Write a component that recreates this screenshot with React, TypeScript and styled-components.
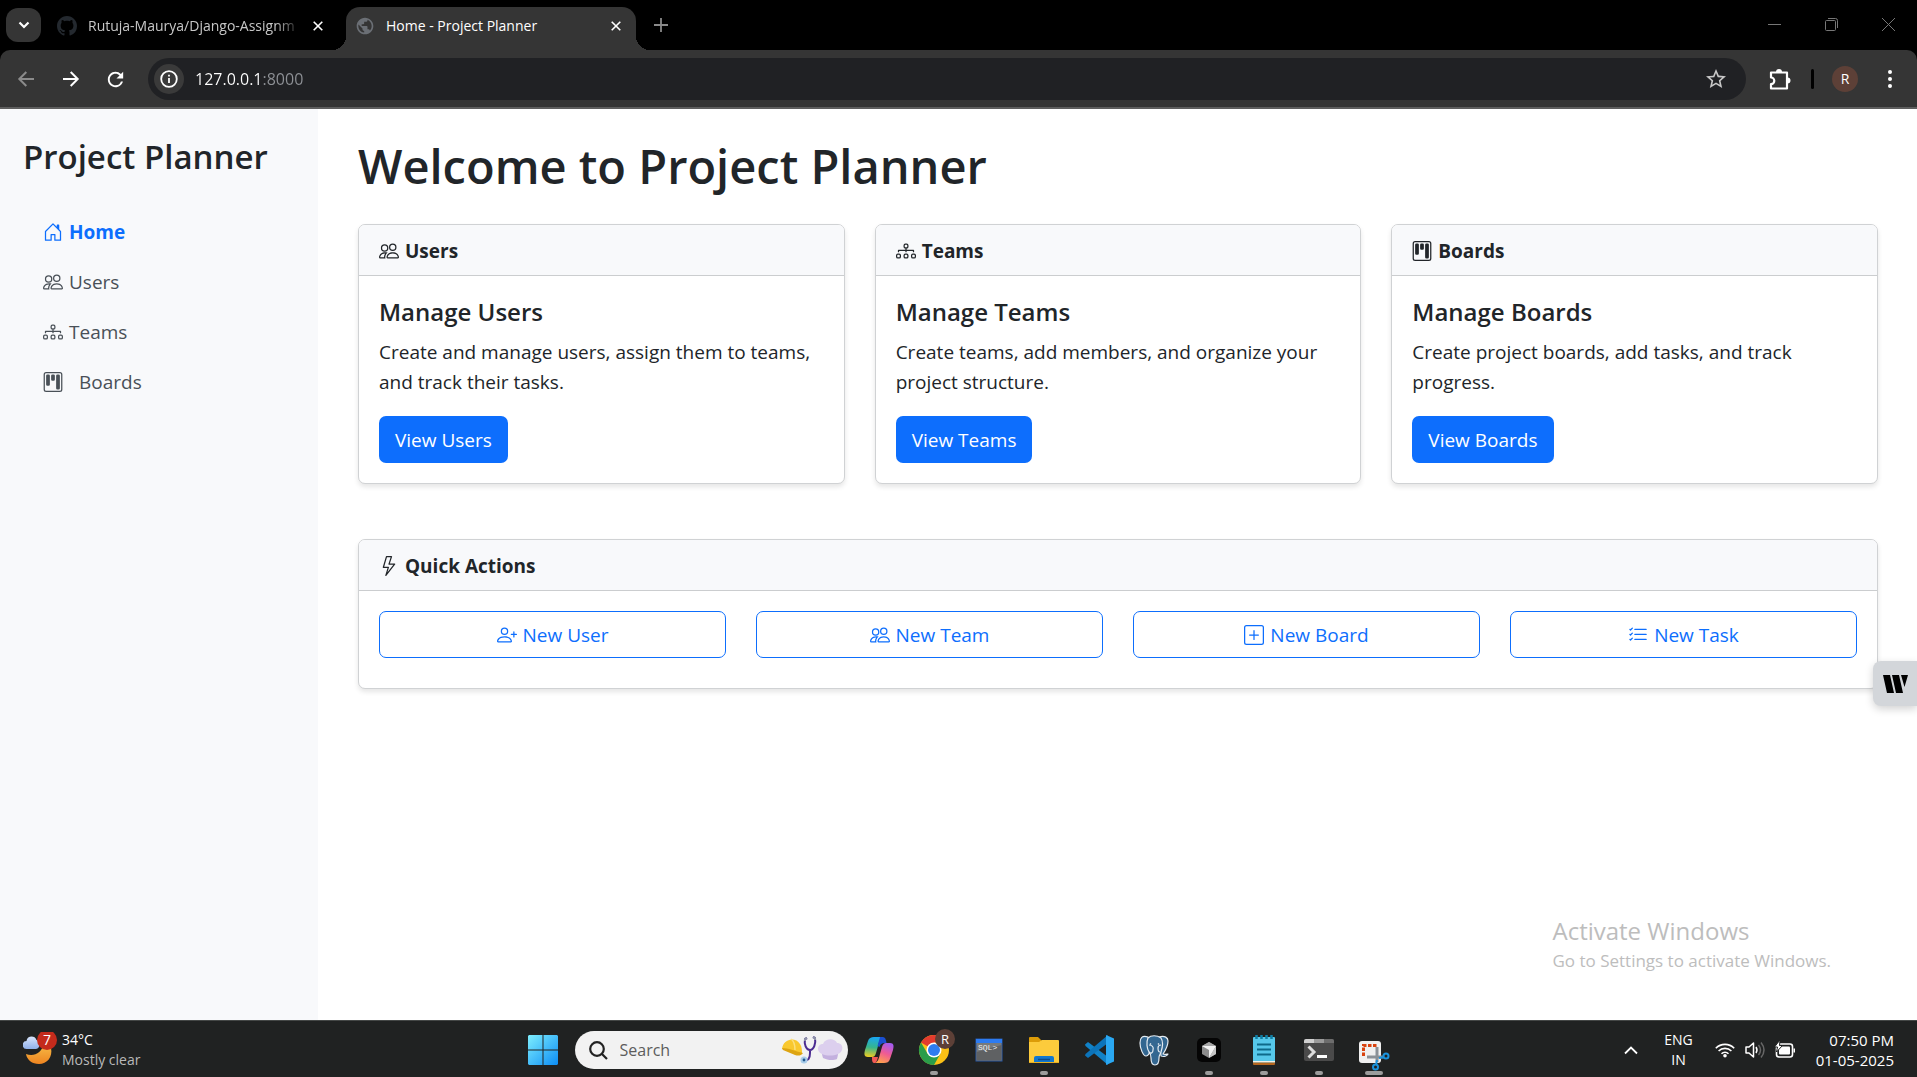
import React from "react";
import styled, { createGlobalStyle, css } from "styled-components";
import {
  BsDiagram3,
  BsGithub,
  BsHouseDoor,
  BsKanban,
  BsLightning,
  BsListCheck,
  BsPeople,
  BsPersonPlus,
  BsPlusSquare,
} from "react-icons/bs";
import { MdPublic, MdRefresh, MdStarOutline } from "react-icons/md";

const GlobalStyle = createGlobalStyle`
  *, *::before, *::after { box-sizing: border-box; }
  body {
    margin: 0;
    background: #fff;
    color: #212529;
    font-family: "Open Sans", "Noto Sans", sans-serif;
    font-size: 19px;
    line-height: 30px;
  }
  h1, h2, h3, p { margin: 0; }
  a { text-decoration: none; color: inherit; }
  button, input { font: inherit; color: inherit; border: 0; padding: 0; background: none; }
  svg { display: block; flex: none; }
`;

const Screen = styled.div`
  min-height: 100vh;
  display: flex;
  flex-direction: column;
`;

/* ---------- browser frame ---------- */

const TabStrip = styled.div`
  display: flex;
  align-items: flex-start;
  height: 50px;
  padding: 0 0 0 6px;
  background: #000;
  color: #c7c7c7;
  font-size: 14px;
  line-height: 20px;
`;

const TabSearch = styled.button`
  display: grid;
  place-items: center;
  width: 35px;
  height: 34px;
  margin: 8px 7px 0 0;
  border-radius: 12px;
  background: #353535;
  color: #fff;
`;

const Tab = styled.div<{ $active?: boolean }>`
  position: relative;
  display: flex;
  align-items: center;
  gap: 11px;
  width: 290px;
  height: 43px;
  margin: 7px 8px 0 0;
  padding: 0 14px 6px 9px;
  ${(p) =>
    p.$active &&
    css`
      background: #353535;
      color: #fff;
      border-radius: 14px 14px 0 0;
      &::before,
      &::after {
        content: "";
        position: absolute;
        bottom: 0;
        width: 14px;
        height: 14px;
      }
      &::before {
        left: -14px;
        background: radial-gradient(circle at 0 0, #000 14px, #353535 14px);
      }
      &::after {
        right: -14px;
        background: radial-gradient(circle at 100% 0, #000 14px, #353535 14px);
      }
    `}
`;

const TabTitle = styled.span<{ $fade?: boolean }>`
  flex: 1;
  min-width: 0;
  overflow: hidden;
  white-space: nowrap;
  ${(p) =>
    p.$fade &&
    css`
      mask-image: linear-gradient(90deg, #000 88%, transparent);
    `}
`;

const PlainButton = styled.button`
  display: grid;
  place-items: center;
`;

const NewTab = styled(PlainButton)`
  width: 34px;
  height: 34px;
  margin-top: 8px;
  color: #8a8a8a;
`;

const WindowControls = styled.div`
  display: flex;
  margin-left: auto;
  color: #777;
`;

const WindowButton = styled(PlainButton)`
  width: 57px;
  height: 48px;
`;

const ToolbarBack = styled.div`
  background: #000;
`;

const Toolbar = styled.div`
  display: flex;
  align-items: center;
  height: 59px;
  padding: 1px 7px 0 3px;
  border-bottom: 2px solid #5e5e5e;
  border-radius: 10px 10px 0 0;
  background: #353535;
  color: #fff;
`;

const NavButton = styled(PlainButton)<{ $dim?: boolean }>`
  width: 45px;
  height: 40px;
  color: ${(p) => (p.$dim ? "#8b8b8b" : "#fff")};
`;

const AddressBar = styled.div`
  flex: 1;
  display: flex;
  align-items: center;
  gap: 11px;
  height: 42px;
  margin: 0 14px 0 10px;
  padding: 0 18px 0 6px;
  border-radius: 21px;
  background: #202124;
`;

const SiteInfo = styled(PlainButton)`
  width: 30px;
  height: 30px;
  border-radius: 50%;
  background: #3a3a3a;
`;

const AddressInput = styled.input`
  flex: 1;
  min-width: 0;
  outline: none;
  font-size: 16px;
  line-height: 24px;
  background: linear-gradient(90deg, #fff 67px, #8e9196 67px);
  background-clip: text;
  -webkit-text-fill-color: transparent;
`;

const ToolButton = styled(PlainButton)`
  width: 40px;
  height: 40px;
`;

const ToolDivider = styled.span`
  width: 3px;
  height: 20px;
  margin: 0 18px 0 11px;
  border-radius: 2px;
  background: #000;
`;

const Avatar = styled.button`
  width: 26px;
  height: 26px;
  margin-right: 12px;
  border-radius: 50%;
  background: #5d4037;
  font-size: 14px;
  line-height: 26px;
  text-align: center;
`;

/* ---------- page ---------- */

const Page = styled.div`
  flex: 1;
  display: flex;
  position: relative;
`;

const Sidebar = styled.aside`
  width: 318px;
  flex: none;
  padding: 27px 23px;
  background: #f8f9fb;
`;

const Brand = styled.h2`
  margin-bottom: 29px;
  font-size: 33px;
  line-height: 42px;
  font-weight: 600;
`;

const NavLink = styled.a<{ $active?: boolean; $wide?: boolean }>`
  display: flex;
  align-items: center;
  gap: ${(p) => (p.$wide ? 16 : 6)}px;
  padding: 10px 20px;
  color: ${(p) => (p.$active ? "#0d6efd" : "#495057")};
  font-weight: ${(p) => (p.$active ? 700 : 400)};
`;

const Main = styled.main`
  flex: 1;
  min-width: 0;
  padding: 27px 39px 25px 40px;
`;

const Title = styled.h1`
  margin-bottom: 28px;
  font-size: 47px;
  line-height: 60px;
  font-weight: 600;
`;

const CardGrid = styled.div`
  display: grid;
  grid-template-columns: repeat(3, 1fr);
  gap: 30px;
  margin-bottom: 55px;
`;

const Card = styled.section`
  border: 1px solid #d0d2d4;
  border-radius: 7px;
  background: #fff;
  box-shadow: 0 3px 5px rgba(0, 0, 0, 0.1);
`;

const CardHeader = styled.header`
  display: flex;
  align-items: center;
  gap: 6px;
  padding: 11px 20px 9px;
  border-bottom: 1px solid #cbcdcf;
  border-radius: 6px 6px 0 0;
  background: #f8f9fb;
  font-weight: 700;
`;

const CardBody = styled.div`
  padding: 21px 20px 20px;
`;

const CardTitle = styled.h3`
  margin-bottom: 10px;
  font-size: 24px;
  line-height: 30px;
  font-weight: 600;
`;

const CardText = styled.p`
  margin-bottom: 19px;
`;

const PrimaryLink = styled.a`
  display: inline-block;
  padding: 9px 16px 8px;
  border-radius: 7px;
  background: #0d6efd;
  color: #fff;
  vertical-align: top;
`;

const ActionGrid = styled.div`
  display: grid;
  grid-template-columns: repeat(4, 1fr);
  gap: 30px;
  padding: 20px 20px 30px;
`;

const OutlineLink = styled.a`
  display: flex;
  align-items: center;
  justify-content: center;
  gap: 6px;
  padding: 8px 15px 7px;
  border: 1px solid #0d6efd;
  border-radius: 7px;
  color: #0d6efd;
`;

const SideWidget = styled.button`
  position: absolute;
  right: 0;
  top: 552px;
  display: grid;
  place-items: center;
  width: 44px;
  height: 45px;
  border-radius: 8px 0 0 8px;
  background: #d3d6da;
  box-shadow: 0 3px 8px rgba(0, 0, 0, 0.18);
`;

const Watermark = styled.div`
  position: absolute;
  right: 86px;
  bottom: 46px;
  color: #bdbdbd;
  font-size: 17px;
  line-height: 26px;
`;

const WatermarkTitle = styled.div`
  font-size: 24px;
  line-height: 34px;
`;

/* ---------- taskbar ---------- */

const Taskbar = styled.footer`
  display: grid;
  grid-template-columns: 1fr auto 1fr;
  height: 57px;
  padding-top: 2px;
  border-top: 1px solid #444746;
  background: #202222;
  color: #fff;
  font-size: 14px;
  line-height: 20px;
`;

const Weather = styled.button`
  display: flex;
  align-items: center;
  gap: 5px;
  padding-left: 23px;
  text-align: left;
`;

const Muted = styled.div`
  color: #b9b9b9;
`;

const Apps = styled.div`
  display: flex;
  align-items: center;
`;

const AppButton = styled.button<{ $mark?: number }>`
  position: relative;
  display: grid;
  place-items: center;
  width: 55px;
  height: 54px;
  svg {
    overflow: visible;
  }
  ${(p) =>
    p.$mark &&
    css`
      &::after {
        content: "";
        position: absolute;
        bottom: 2px;
        left: calc(50% - ${p.$mark / 2}px);
        width: ${p.$mark}px;
        height: 4px;
        border-radius: 2px;
        background: #9c9c9c;
      }
    `}
`;

const SearchBox = styled.label`
  display: flex;
  align-items: center;
  gap: 12px;
  width: 273px;
  height: 38px;
  margin: 0 4px;
  padding: 0 5px 0 14px;
  border-radius: 19px;
  background: #f2f2f2;
`;

const SearchInput = styled.input`
  flex: 1;
  min-width: 0;
  outline: none;
  font-size: 16px;
  line-height: 24px;
  &::placeholder {
    color: #5c5c5c;
    opacity: 1;
  }
`;

const Tray = styled.div`
  display: flex;
  align-items: center;
  justify-content: flex-end;
  padding-right: 23px;
`;

const TrayGroup = styled.button`
  display: flex;
  align-items: center;
  gap: 10px;
  margin-right: 20px;
`;

const Language = styled.button`
  margin: 0 22px 0 26px;
  text-align: center;
`;

const Clock = styled.button`
  font-size: 15px;
  text-align: right;
`;

/* ---------- drawings ---------- */

const CloseIcon = () => (
  <svg width="12" height="12" viewBox="0 0 12 12" stroke="#fff" strokeWidth="1.6">
    <path d="M1.7 1.7l8.6 8.6M10.3 1.7l-8.6 8.6" />
  </svg>
);

const ArrowIcon = ({ flip }: { flip?: boolean }) => (
  <svg width="18" height="18" viewBox="0 0 18 18" fill="none" stroke="currentColor" strokeWidth="2">
    {flip ? <path d="M17 9H2.5M9.3 2L2.3 9l7 7" /> : <path d="M1 9h14.500M8.7 2l7 7-7 7" />}
  </svg>
);

const PuzzleIcon = () => (
  <svg width="22" height="22" viewBox="0 0 22 22">
    <path
      d="M2 4.500h16v16H2v-4.400a3.200 3.200 0 0 0 0-6.600z"
      fill="none"
      stroke="#fff"
      strokeWidth="2.200"
      strokeLinejoin="round"
    />
    <path d="M7 4a3 3 0 0 1 6 0zM18.500 9.500a3 3 0 0 1 0 6z" fill="#fff" />
  </svg>
);

const WeatherIcon = () => (
  <svg width="34" height="36" viewBox="0 0 34 36">
    <defs>
      <linearGradient id="moon" x1="0" y1="0" x2="0" y2="1">
        <stop offset="0" stopColor="#f6c04a" />
        <stop offset="1" stopColor="#ee8420" />
      </linearGradient>
      <linearGradient id="cloud" x1="0" y1="0" x2="0" y2="1">
        <stop offset="0" stopColor="#d7e4fb" />
        <stop offset="1" stopColor="#8fb0ea" />
      </linearGradient>
    </defs>
    <path d="M3 22c8 3 16-1 18-11l7 5c2 9-4 16-12 16C9 32 4 28 3 22z" fill="url(#moon)" />
    <path d="M4 17a4 4 0 0 1-.5-8C4 3.500 12 3 13.500 8c4 .5 4 9-.5 9z" fill="url(#cloud)" />
    <circle cx="24" cy="8" r="10" fill="#c42b1c" />
    <text x="24" y="13" fontSize="14" textAnchor="middle" fill="#fff">
      7
    </text>
  </svg>
);

const StartIcon = () => (
  <svg width="30" height="30" viewBox="0 0 30 30">
    <defs>
      <linearGradient id="start" x1="0" y1="0" x2="1" y2="1">
        <stop offset="0" stopColor="#7eeefd" />
        <stop offset="1" stopColor="#0c8df5" />
      </linearGradient>
    </defs>
    <path d="M1 0h13.500v14.500H0V1zM15.500 0H29l1 1v13.500H15.500zM0 15.500h14.500V30H1l-1-1zM15.500 15.500H30V29l-1 1H15.500z" fill="url(#start)" />
  </svg>
);

const SearchArt = () => (
  <svg width="62" height="30" viewBox="0 0 62 30">
    <path d="M1 14C2 4 14 1 19 9c2 3 2 6 2 10-7-1-13-3-20-5z" fill="#f9c82e" />
    <path d="M1 13c6 0 13 3 21 5-2 3-5 3-8 2L2 15z" fill="#dda411" />
    <path d="M10 4c3 2 4 6 4 11" stroke="#fce07c" strokeWidth="1.500" fill="none" />
    <path d="M26 3l-2 1c-1 5 1 11 5 11s6-7 5-12l-2-1M29 15v3c0 6-2 8-6 7" fill="none" stroke="#4b2c91" strokeWidth="2" />
    <path d="M26 3l-2 1v2M32 2l2 1v2" fill="none" stroke="#8d93a8" strokeWidth="2" />
    <circle cx="23" cy="25" r="3.500" fill="#a9cdea" />
    <circle cx="23" cy="25" r="1.400" fill="#22598f" />
    <path d="M41 19c-6-2-5-10 1-10 2-6 12-6 14-1 7 0 7 9 1 11l-1 4c-4 2-10 1-14-1z" fill="#dccfee" />
    <path d="M41 19c5 2 11 2 16 0l-1 5c-4 2-10 1-14-1z" fill="#c3b0de" />
  </svg>
);

const CopilotIcon = () => (
  <svg width="30" height="28" viewBox="0 0 30 28">
    <defs>
      <linearGradient id="cop1" x1="0.300" y1="0" x2="0.200" y2="1">
        <stop offset="0" stopColor="#1aa7f0" />
        <stop offset="0.500" stopColor="#36b58d" />
        <stop offset="1" stopColor="#f2cd1e" />
      </linearGradient>
      <linearGradient id="cop2" x1="0.700" y1="0" x2="0.300" y2="1">
        <stop offset="0" stopColor="#a45bf0" />
        <stop offset="0.500" stopColor="#ef5b93" />
        <stop offset="1" stopColor="#ffa24c" />
      </linearGradient>
    </defs>
    <path d="M10 1h9c-3 1-4 5-5 9l-2 7c-1 3-2 4-4 4H4c-4 0-4-3-3-7l3-9c1-3 3-4 6-4z" fill="url(#cop1)" />
    <path d="M16 1h3c2 0 3 2 3.500 6h-2c-3 0-4 1-5 4l-2-1z" fill="#1a4fd0" />
    <path d="M20 27h-9c3-1 4-5 5-9l2-7c1-3 2-4 4-4h4c4 0 4 3 3 7l-3 9c-1 3-3 4-6 4z" fill="url(#cop2)" />
    <path d="M8 21h6c-1 4-2 6-3 6-3 0-3-2-3-6z" fill="#f25a55" />
  </svg>
);

const ChromeIcon = () => (
  <svg width="30" height="30" viewBox="0 0 30 30">
    <circle cx="15" cy="15" r="15" fill="#fbc116" />
    <path d="M15 15L2 7.500A15 15 0 0 1 28 7.500H15z" fill="#e33b2e" />
    <path d="M2 7.500A15 15 0 0 0 15 30l6.500-11.500L15 15l-6.500 3.500z" fill="#2a9d4a" />
    <circle cx="15" cy="15" r="7.500" fill="#fff" />
    <circle cx="15" cy="15" r="6" fill="#2f7cf0" />
    <circle cx="26" cy="4" r="10" fill="#5d4037" />
    <text x="26" y="8.500" fontSize="13" textAnchor="middle" fill="#fff">
      R
    </text>
  </svg>
);

const SqlIcon = () => (
  <svg width="28" height="24" viewBox="0 0 28 24">
    <rect x="1" y="1" width="26" height="22" fill="#777a7c" stroke="#2659a8" />
    <rect x="1" y="1" width="26" height="4" fill="#2d7bf0" />
    <path d="M1.500 22.500V14l25-7v15.500z" fill="#5f6163" />
    <text x="3" y="12" fontSize="8" fontFamily="Liberation Mono, monospace" fill="#eee">
      SQL&gt;
    </text>
  </svg>
);

const FolderIcon = () => (
  <svg width="30" height="28" viewBox="0 0 30 28">
    <path d="M0 2q0-1 1-1h8l4 4-3 4H0z" fill="#dc9c08" />
    <path d="M0 6h10l3-2h16q1 0 1 1v22H0z" fill="#fccb3c" />
    <path d="M5 27v-5q0-2 2-2h16q2 0 2 2v5z" fill="#1177cf" />
    <path d="M9 23.500h12" stroke="#0a4b8c" strokeWidth="1.500" />
    <path d="M0 26.500h30" stroke="#e8b01f" />
  </svg>
);

const CodeIcon = () => (
  <svg width="30" height="30" viewBox="0 0 30 30">
    <path d="M1 9.500l3-2.500L24 22v8L1.500 11z" fill="#1182c8" />
    <path d="M1 20.500L4 23 24 8V0L1.500 19z" fill="#0c74ba" />
    <path d="M22 0l8 3.500v23L22 30z" fill="#2aa8f2" />
  </svg>
);

const ElephantIcon = () => (
  <svg width="30" height="30" viewBox="0 0 30 30" fill="#336791" stroke="#e4ebf1" strokeWidth="1.200" strokeLinejoin="round">
    <path d="M9 2C3 0 1 3 1 8c0 5 3 13 6 13 2 0 3-2 4-4z" />
    <path d="M20 2c6-2 9 1 9 4 0 5-3 10-5 13 2 1 4 0 5 0-1 2-4 3-7 2z" />
    <path d="M9 3c3-3 9-3 13 0 2 3 2 8 0 14-1 3-2 3-2 6 0 5-1 7-4 7s-4-2-4-7c0-3 0-4-2-6-2-3-3-10-1-14z" />
    <path d="M10 17c2 2 4 1 4-2 1-3-1-5-4-5M21 17c-2 0-2-2-2-4 0-2 1-3 3-3" fill="none" />
    <circle cx="11.500" cy="9" r="0.800" fill="#fff" stroke="none" />
    <circle cx="19.500" cy="9" r="0.800" fill="#fff" stroke="none" />
  </svg>
);

const CubeIcon = () => (
  <svg width="24" height="24" viewBox="0 0 24 24">
    <rect width="24" height="24" rx="5" fill="#050505" />
    <path d="M12 4l7 4v8l-7 4-7-4V8z" fill="#8b8b8b" />
    <path d="M5 8l7-4 7 4-7 2z" fill="#a5a5a5" />
    <path d="M5 8h14l-7 12v-8z" fill="#f1f1f1" />
    <path d="M19 8v8l-7 4z" fill="#c4c4c4" />
  </svg>
);

const NotepadIcon = () => (
  <svg width="24" height="30" viewBox="0 0 24 30">
    <rect x="1" y="2" width="22" height="27" rx="1" fill="#56c8ea" />
    <path d="M1 26h22v1.500H1z" fill="#f4f0e8" />
    <path d="M1 27.500h22V29q0 1-1 1H2q-1 0-1-1z" fill="#b4661f" />
    <path d="M5 9.500h14M5 14.500h14M5 19.500h14" stroke="#0e6a8a" strokeWidth="2" />
    <path d="M4.500 0v4M9.500 0v4M14.500 0v4M19.500 0v4" stroke="#0f7fa5" strokeWidth="2.500" />
  </svg>
);

const TerminalIcon = () => (
  <svg width="30" height="22" viewBox="0 0 30 22">
    <rect width="30" height="22" rx="2" fill="#4a4a4a" />
    <path d="M0 4V2q0-2 2-2h8v4z" fill="#d0d0d0" />
    <path d="M10 0h10v4H10z" fill="#9b9b9b" />
    <path d="M20 0h8q2 0 2 2v2H20z" fill="#6d6d6d" />
    <path d="M4.500 7.500L10 13l-5.500 5.500" fill="none" stroke="#ddd" strokeWidth="3" />
    <path d="M13 17.500h10" stroke="#fff" strokeWidth="3" />
  </svg>
);

const SnipIcon = () => (
  <svg width="30" height="24" viewBox="0 0 30 24">
    <rect width="22" height="22" y="3" rx="3" fill="#f0f0f0" />
    <path d="M4.500 18V7.500H18" fill="none" stroke="#d9430f" strokeWidth="3" strokeDasharray="3.500 1.500" />
    <path d="M18 9v15M8 19h16" stroke="#8b9197" strokeWidth="3" />
    <circle cx="27" cy="18" r="2.500" fill="none" stroke="#1a93dd" strokeWidth="2" />
    <circle cx="16.500" cy="29" r="2.500" fill="none" stroke="#1a93dd" strokeWidth="2" />
    <path d="M17 27l1-5M20 20l5-1" fill="none" stroke="#1a93dd" strokeWidth="2" />
  </svg>
);

const WifiIcon = () => (
  <svg width="20" height="16" viewBox="0 0 20 16" fill="none" stroke="#fff" strokeWidth="1.600">
    <path d="M.8 6.200a13 13 0 0 1 18.400 0M3.600 9a9 9 0 0 1 12.800 0M6.500 11.800a5 5 0 0 1 7 0" />
    <circle cx="10" cy="13.800" r="1.800" fill="#fff" stroke="none" />
  </svg>
);

const SpeakerIcon = () => (
  <svg width="20" height="18" viewBox="0 0 20 18" fill="none" stroke="#fff" strokeWidth="1.500">
    <path d="M1 6h3l4.500-4v14L4 12H1z" strokeLinejoin="round" />
    <path d="M11 6q2 3 0 6" />
    <path d="M13.500 4q4 5 0 10M16 1.500q6 7.500 0 15" stroke="#666" />
  </svg>
);

const BatteryIcon = () => (
  <svg width="21" height="18" viewBox="0 0 21 18">
    <rect x="1.500" y="3" width="16" height="13" rx="2.500" fill="none" stroke="#fff" strokeWidth="1.600" />
    <rect x="4" y="5.500" width="11" height="8" rx="1" fill="#fff" />
    <path d="M18.500 7.500h1.500v4h-1.500z" fill="#fff" />
    <path d="M5-1L-.5 6h3L1.500 11l6-6.500H4.500z" fill="#fff" stroke="#202222" strokeWidth="1" />
  </svg>
);

/* ---------- data ---------- */

const navItems = [
  { label: "Home", Icon: BsHouseDoor, active: true },
  { label: "Users", Icon: BsPeople },
  { label: "Teams", Icon: BsDiagram3 },
  { label: "Boards", Icon: BsKanban, wide: true },
];

const cards = [
  { label: "Users", Icon: BsPeople, text: "Create and manage users, assign them to teams, and track their tasks." },
  { label: "Teams", Icon: BsDiagram3, text: "Create teams, add members, and organize your project structure." },
  { label: "Boards", Icon: BsKanban, text: "Create project boards, add tasks, and track progress." },
];

const actions = [
  { label: "New User", Icon: BsPersonPlus },
  { label: "New Team", Icon: BsPeople },
  { label: "New Board", Icon: BsPlusSquare },
  { label: "New Task", Icon: BsListCheck },
];

const apps = [
  { name: "Copilot", icon: <CopilotIcon /> },
  { name: "Chrome", icon: <ChromeIcon />, mark: 8 },
  { name: "SQL", icon: <SqlIcon /> },
  { name: "File Explorer", icon: <FolderIcon />, mark: 8 },
  { name: "VS Code", icon: <CodeIcon /> },
  { name: "PostgreSQL", icon: <ElephantIcon /> },
  { name: "Cursor", icon: <CubeIcon />, mark: 8 },
  { name: "Notepad", icon: <NotepadIcon />, mark: 8 },
  { name: "Terminal", icon: <TerminalIcon />, mark: 8 },
  { name: "Snipping Tool", icon: <SnipIcon />, mark: 18 },
];

const BrowserFrame = () => (
  <header>
    <TabStrip>
      <TabSearch aria-label="Search tabs">
        <svg width="12" height="8" viewBox="0 0 12 8" fill="none" stroke="currentColor" strokeWidth="2.200">
          <path d="M1.500 1.500L6 6l4.500-4.500" />
        </svg>
      </TabSearch>
      <Tab>
        <BsGithub size={20} color="#24292f" />
        <TabTitle $fade>Rutuja-Maurya/Django-Assignm</TabTitle>
        <PlainButton aria-label="Close tab">
          <CloseIcon />
        </PlainButton>
      </Tab>
      <Tab $active>
        <MdPublic size={20} color="#6b6f75" />
        <TabTitle>Home - Project Planner</TabTitle>
        <PlainButton aria-label="Close tab">
          <CloseIcon />
        </PlainButton>
      </Tab>
      <NewTab aria-label="New tab">
        <svg width="14" height="14" viewBox="0 0 14 14" stroke="currentColor" strokeWidth="1.800">
          <path d="M7 0v14M0 7h14" />
        </svg>
      </NewTab>
      <WindowControls>
        <WindowButton aria-label="Minimize">
          <svg width="13" height="13" viewBox="0 0 13 13" stroke="currentColor">
            <path d="M0 6.500h13" />
          </svg>
        </WindowButton>
        <WindowButton aria-label="Restore">
          <svg width="13" height="13" viewBox="0 0 13 13" fill="none" stroke="currentColor">
            <rect x="0.500" y="2.500" width="10" height="10" rx="1" />
            <path d="M3 .5h7.500q2 0 2 2V10" />
          </svg>
        </WindowButton>
        <WindowButton aria-label="Close">
          <svg width="13" height="13" viewBox="0 0 13 13" stroke="currentColor">
            <path d="M0 0l13 13M13 0L0 13" />
          </svg>
        </WindowButton>
      </WindowControls>
    </TabStrip>
    <ToolbarBack>
      <Toolbar>
        <NavButton $dim aria-label="Back">
          <ArrowIcon flip />
        </NavButton>
        <NavButton aria-label="Forward">
          <ArrowIcon />
        </NavButton>
        <NavButton aria-label="Reload">
          <MdRefresh size={23} />
        </NavButton>
        <AddressBar>
          <SiteInfo aria-label="Site information">
            <svg width="18" height="18" viewBox="0 0 18 18" fill="none" stroke="#fff" strokeWidth="1.800">
              <circle cx="9" cy="9" r="7.800" />
              <path d="M9 8v5M9 4.800v1.800" />
            </svg>
          </SiteInfo>
          <AddressInput aria-label="Address" defaultValue="127.0.0.1:8000" />
          <PlainButton aria-label="Bookmark">
            <MdStarOutline size={24} color="#c7c7c7" />
          </PlainButton>
        </AddressBar>
        <ToolButton aria-label="Extensions">
          <PuzzleIcon />
        </ToolButton>
        <ToolDivider />
        <Avatar>R</Avatar>
        <ToolButton aria-label="Menu">
          <svg width="4" height="18" viewBox="0 0 4 18" fill="#fff">
            <circle cx="2" cy="2" r="2" />
            <circle cx="2" cy="9" r="2" />
            <circle cx="2" cy="16" r="2" />
          </svg>
        </ToolButton>
      </Toolbar>
    </ToolbarBack>
  </header>
);

export default function App() {
  return (
    <Screen>
      <GlobalStyle />
      <BrowserFrame />
      <Page>
        <Sidebar>
          <Brand>Project Planner</Brand>
          <nav>
            {navItems.map(({ label, Icon, active, wide }) => (
              <NavLink key={label} href="#" $active={active} $wide={wide}>
                <Icon size={20} />
                {label}
              </NavLink>
            ))}
          </nav>
        </Sidebar>
        <Main>
          <Title>Welcome to Project Planner</Title>
          <CardGrid>
            {cards.map(({ label, Icon, text }) => (
              <Card key={label}>
                <CardHeader>
                  <Icon size={20} />
                  {label}
                </CardHeader>
                <CardBody>
                  <CardTitle>Manage {label}</CardTitle>
                  <CardText>{text}</CardText>
                  <PrimaryLink href="#">View {label}</PrimaryLink>
                </CardBody>
              </Card>
            ))}
          </CardGrid>
          <Card>
            <CardHeader>
              <BsLightning size={20} />
              Quick Actions
            </CardHeader>
            <ActionGrid>
              {actions.map(({ label, Icon }) => (
                <OutlineLink key={label} href="#">
                  <Icon size={20} />
                  {label}
                </OutlineLink>
              ))}
            </ActionGrid>
          </Card>
        </Main>
        <SideWidget aria-label="Writing assistant">
          <svg width="25" height="18" viewBox="0 0 25 18">
            <path d="M0 0h7l4 18H4zM9 0h7l4 18h-7zM18 0h7l-3.500 12z" />
          </svg>
        </SideWidget>
        <Watermark>
          <WatermarkTitle>Activate Windows</WatermarkTitle>
          Go to Settings to activate Windows.
        </Watermark>
      </Page>
      <Taskbar>
        <Weather>
          <WeatherIcon />
          <div>
            34°C
            <Muted>Mostly clear</Muted>
          </div>
        </Weather>
        <Apps>
          <AppButton aria-label="Start">
            <StartIcon />
          </AppButton>
          <SearchBox>
            <svg width="19" height="19" viewBox="0 0 19 19" fill="none" stroke="#222" strokeWidth="2.200">
              <circle cx="8" cy="8" r="6.800" />
              <path d="M13 13l5 5" />
            </svg>
            <SearchInput aria-label="Search" placeholder="Search" />
            <SearchArt />
          </SearchBox>
          {apps.map(({ name, icon, mark }) => (
            <AppButton key={name} aria-label={name} $mark={mark}>
              {icon}
            </AppButton>
          ))}
        </Apps>
        <Tray>
          <button aria-label="Hidden icons">
            <svg width="14" height="9" viewBox="0 0 14 9" fill="none" stroke="#fff" strokeWidth="1.800">
              <path d="M1 7.500l6-6 6 6" />
            </svg>
          </button>
          <Language>
            ENG
            <br />
            IN
          </Language>
          <TrayGroup aria-label="Network, volume and battery">
            <WifiIcon />
            <SpeakerIcon />
            <BatteryIcon />
          </TrayGroup>
          <Clock>
            07:50 PM
            <br />
            01-05-2025
          </Clock>
        </Tray>
      </Taskbar>
    </Screen>
  );
}
